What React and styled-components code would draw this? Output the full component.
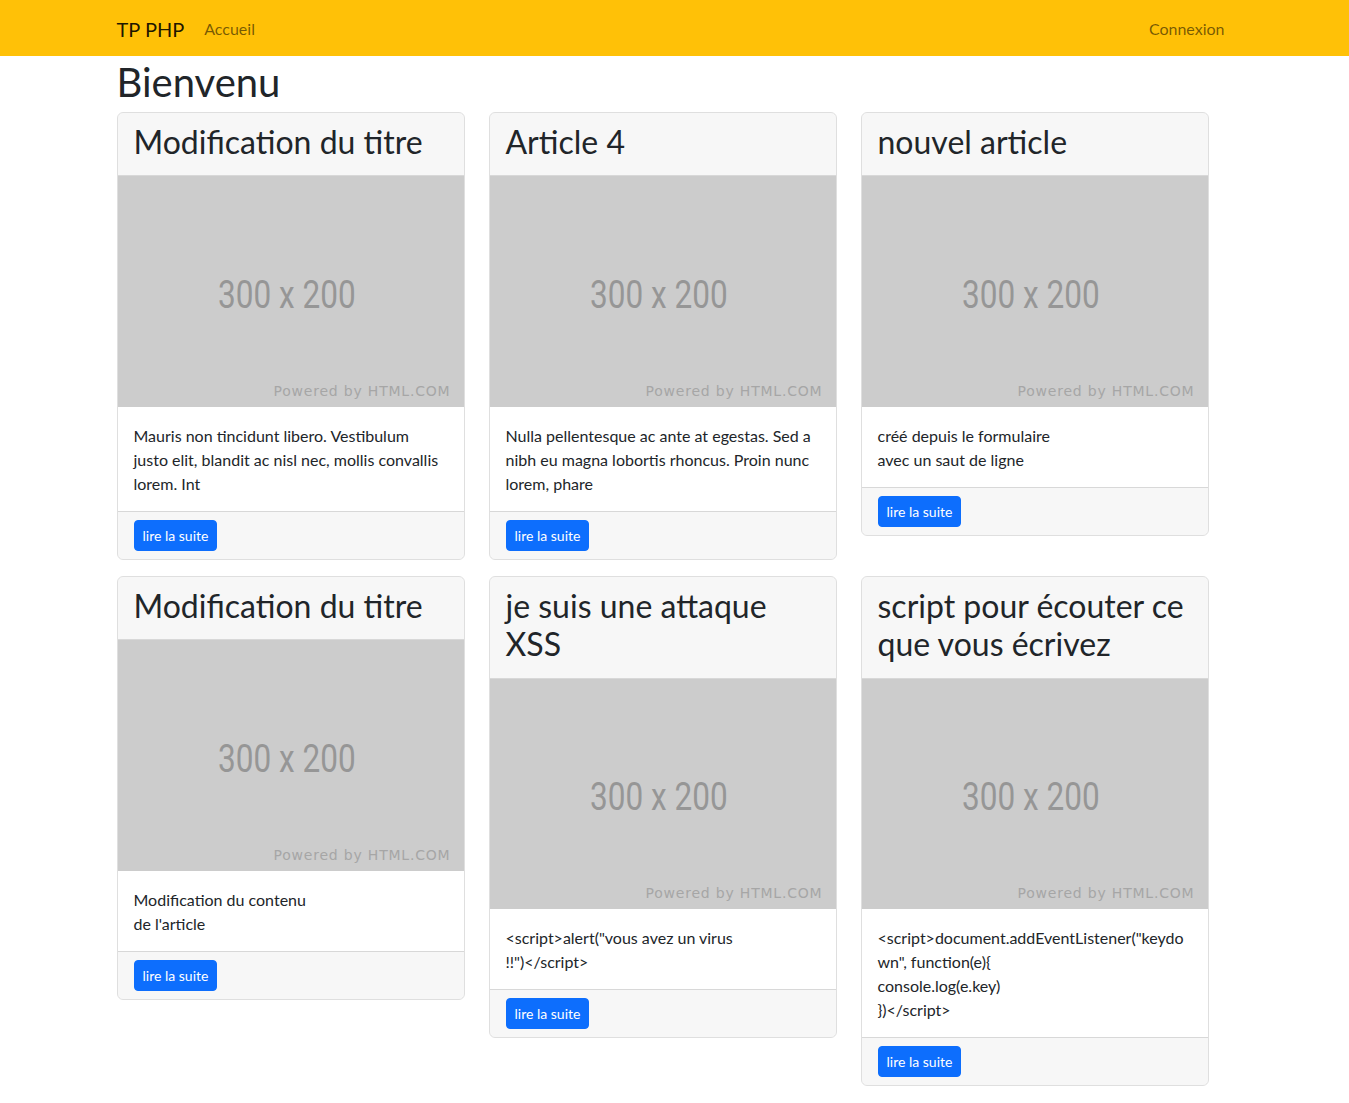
import React from "react";
import styled, { createGlobalStyle } from "styled-components";

const GlobalStyle = createGlobalStyle`
  body {
    margin: 0;
    font-family: Lato, "Noto Sans", sans-serif;
    font-size: 16px;
    line-height: 1.5;
    color: #212529;
    background: #fff;
  }
  * { box-sizing: border-box; }
`;

const Navbar = styled.nav`
  background-color: #ffc107;
  height: 56px;
`;

const Container = styled.div`
  max-width: 1140px;
  margin: 0 auto;
  padding: 0 12px;
`;

const NavInner = styled(Container)`
  height: 100%;
  display: flex;
  align-items: center;
  padding-top: 2px;
`;

const Brand = styled.a`
  font-size: 20px;
  line-height: 30px;
  color: rgba(0, 0, 0, 0.9);
  margin-right: 12px;
  text-decoration: none;
`;

const NavLink = styled.a`
  padding: 8px;
  color: rgba(0, 0, 0, 0.55);
  text-decoration: none;
  margin-left: ${(p) => (p.$right ? "auto" : "0")};
`;

const Title = styled.h1`
  font-size: 40px;
  font-weight: 400;
  line-height: 1.2;
  margin: 0 0 8px;
  padding-top: 2px;
  height: 48px;
`;

const Grid = styled.div`
  display: grid;
  grid-template-columns: repeat(3, 348px);
  column-gap: 24px;
  row-gap: 16px;
  align-items: start;
`;

const Card = styled.div`
  border: 1px solid rgba(0, 0, 0, 0.125);
  border-radius: 6px;
  overflow: hidden;
  overflow-wrap: break-word;
  display: flex;
  flex-direction: column;
`;

const CardHeader = styled.div`
  background-color: rgba(0, 0, 0, 0.03);
  border-bottom: 1px solid rgba(0, 0, 0, 0.125);
  padding: 10px 16px 6px;
`;

const CardTitle = styled.h2`
  font-size: 32px;
  font-weight: 400;
  line-height: 1.2;
  margin: 0 0 8px;
`;

const Placeholder = styled.div`
  position: relative;
  aspect-ratio: 3 / 2;
  background-color: #cccccc;
  display: flex;
  align-items: center;
  justify-content: center;
`;

const Size = styled.span`
  font-family: Roboto, "Liberation Sans", sans-serif;
  font-size: 38px;
  line-height: 1;
  color: #969696;
  transform: translate(-4px, 3px) scaleX(0.83);
`;

const Powered = styled.span`
  position: absolute;
  right: 13px;
  bottom: 5px;
  font-family: "DejaVu Sans", sans-serif;
  font-size: 14px;
  letter-spacing: 0.8px;
  color: #a6a6a6;
`;

const CardBody = styled.div`
  padding: 17px 16px 15px;
`;

const CardText = styled.p`
  margin: 0;
`;

const CardFooter = styled.div`
  background-color: rgba(0, 0, 0, 0.03);
  border-top: 1px solid rgba(0, 0, 0, 0.125);
  padding: 8px 16px;
`;

const Button = styled.a`
  display: inline-block;
  background-color: #0d6efd;
  border: 1px solid #0d6efd;
  border-radius: 4px;
  color: #fff;
  font-size: 14px;
  line-height: 1.5;
  padding: 4px 8px;
  text-decoration: none;
`;

const articles = [
  {
    id: 1,
    title: "Modification du titre",
    content: "Mauris non tincidunt libero. Vestibulum justo elit, blandit ac nisl nec, mollis convallis lorem. Int",
  },
  {
    id: 2,
    title: "Article 4",
    content: "Nulla pellentesque ac ante at egestas. Sed a nibh eu magna lobortis rhoncus. Proin nunc lorem, phare",
  },
  {
    id: 3,
    title: "nouvel article",
    content: "créé depuis le formulaire\navec un saut de ligne",
  },
  {
    id: 4,
    title: "Modification du titre",
    content: "Modification du contenu\nde l'article",
  },
  {
    id: 5,
    title: "je suis une attaque XSS",
    // word joiner keeps `!!")</script>` together, as in the original
    content: '<script>alert("vous avez un virus !!")\u2060</script>',
  },
  {
    id: 6,
    title: "script pour écouter ce que vous écrivez",
    content:
      '<script>document.addEventListener("keydown", function(e){\nconsole.log(e.key)\n})</script>',
  },
];

const nl2br = (text) =>
  text.split("\n").map((line, i, all) => (
    <React.Fragment key={i}>
      {line}
      {i < all.length - 1 && <br />}
    </React.Fragment>
  ));

const App = () => {
  return (
    <>
      <GlobalStyle />
      <Navbar>
        <NavInner>
          <Brand href="#">TP PHP</Brand>
          <NavLink href="#">Accueil</NavLink>
          <NavLink href="#" $right>
            Connexion
          </NavLink>
        </NavInner>
      </Navbar>
      <Container>
        <Title>Bienvenu</Title>
        <Grid>
          {articles.map((article) => (
            <Card key={article.id}>
              <CardHeader>
                <CardTitle>{article.title}</CardTitle>
              </CardHeader>
              <Placeholder>
                <Size>300 x 200</Size>
                <Powered>Powered by HTML.COM</Powered>
              </Placeholder>
              <CardBody>
                <CardText>{nl2br(article.content)}</CardText>
              </CardBody>
              <CardFooter>
                <Button href="#">lire la suite</Button>
              </CardFooter>
            </Card>
          ))}
        </Grid>
      </Container>
    </>
  );
};

export default App;
